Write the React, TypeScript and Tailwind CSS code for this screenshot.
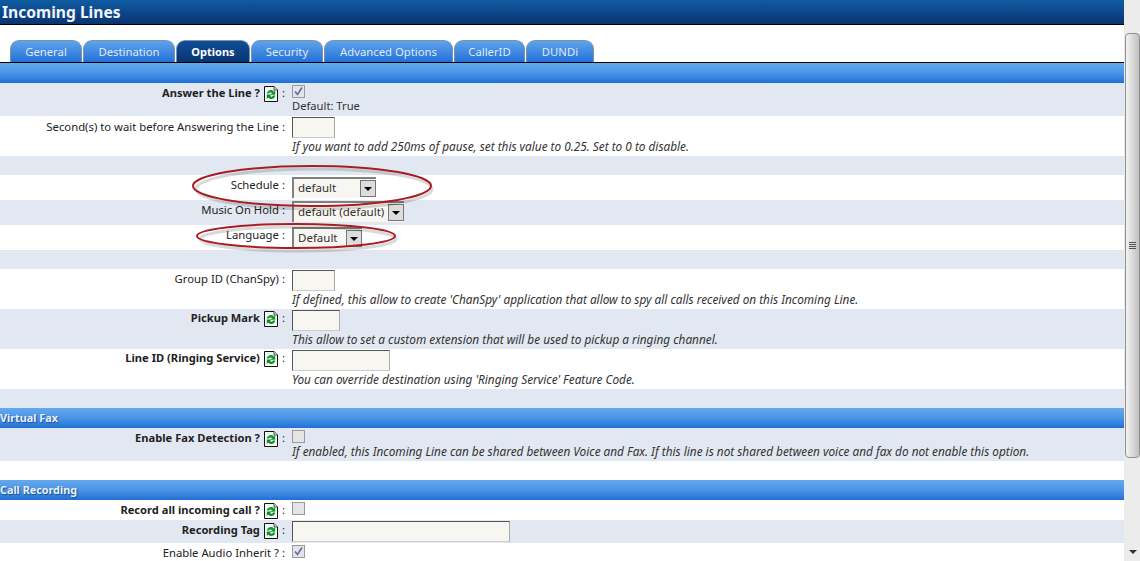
import { ReactNode } from 'react';

const tabs = [
  { label: 'General', w: 'w-[72px]' },
  { label: 'Destination', w: 'w-[92px]' },
  { label: 'Options', w: 'w-[74px]', active: true },
  { label: 'Security', w: 'w-[72px]' },
  { label: 'Advanced Options', w: 'w-[129px]' },
  { label: 'CallerID', w: 'w-[71px]' },
  { label: 'DUNDi', w: 'w-[68px]' },
];

function HelpIcon() {
  return (
    <svg width="14" height="16" viewBox="0 0 14 16" className="mt-[1px] shrink-0">
      <path d="M0.5 0.5H10L13.5 4V15.5H0.5Z" fill="#f4fbf4" stroke="#111" />
      <path d="M10 0.5V4H13.5" fill="#ddd" stroke="#111" strokeWidth="0.7" />
      <path d="M2.8 7.6C3.2 4 8 2.8 9.8 5.4L11.2 4V8.8H6.5L8 7.3C7 6 5.4 6.3 5 7.6Z" fill="#0f9d2c" />
      <path d="M11.2 9.4C10.8 13 6 14.2 4.2 11.6L2.8 13V8.6H7.5L6 10C7 11.2 8.6 10.9 9 9.4Z" fill="#0b8a27" />
    </svg>
  );
}

function Check({ checked }: { checked?: boolean }) {
  return (
    <span className="mt-[2px] flex h-[13px] w-[13px] items-center justify-center border border-[#9a9a9a] bg-[#e4e4e4]">
      {checked && (
        <svg width="11" height="11" viewBox="0 0 11 11">
          <path d="M2 5.5L4.5 8.5L9 1.5" fill="none" stroke="#5c6ea8" strokeWidth="1.6" />
        </svg>
      )}
    </span>
  );
}

function TextBox({ w }: { w: string }) {
  return (
    <input
      readOnly
      className={`${w} mt-[1px] block h-[21px] border border-t-[#555] border-l-[#555] border-r-[#aaa] border-b-[#ccc] bg-[#f8f6f0]`}
    />
  );
}

function Picker({ value, w }: { value: string; w: string }) {
  return (
    <div className={`${w} flex h-[21px] items-center justify-between border-t-2 border-l-2 border-t-[#808080] border-l-[#808080] bg-[#f8f6f0] pl-1`}>
      <span className="pb-[2px] text-[11.5px] whitespace-nowrap text-[#333]">{value}</span>
      <span className="flex h-[17px] w-[16px] shrink-0 items-center justify-center border border-[#777] bg-[#dcdcdc]">
        <span className="h-0 w-0 border-x-[4px] border-t-[4px] border-x-transparent border-t-black" />
      </span>
    </div>
  );
}

function Hint({ children }: { children: ReactNode }) {
  return <p className="text-[11.8px] leading-[14px] whitespace-nowrap italic text-[#333]">{children}</p>;
}

function Row({ h, shade, label, bold, icon, pt = 'pt-[2px]', children }: {
  h: string;
  shade?: boolean;
  label?: string;
  bold?: boolean;
  icon?: boolean;
  pt?: string;
  children?: ReactNode;
}) {
  return (
    <div className={`${h} ${shade ? 'bg-[#e2e8f1]' : 'bg-white'} grid grid-cols-[292px_1fr] overflow-visible`}>
      <div className={`${pt} ${icon ? 'gap-[4px]' : 'gap-[3px]'} flex items-start justify-end pr-[7px] leading-[15px] text-[#222]`}>
        {label && <span className={bold ? 'text-[11.15px] font-bold' : 'text-[11.3px]'}>{label}</span>}
        {icon && <HelpIcon />}
        {label && <span className="text-[11.5px]">:</span>}
      </div>
      <div>{children}</div>
    </div>
  );
}

function Band({ title }: { title?: string }) {
  return (
    <div className="h-5 bg-gradient-to-b from-[#65a9ee] via-[#4a94e6] to-[#1f6fd6] text-[10.8px] leading-5 font-bold text-[#e8f1fb] [text-shadow:1px_1px_1px_#1c4f8f]">
      {title}
    </div>
  );
}

export default function App() {
  return (
    <div className="flex h-[561px] w-[1140px] overflow-hidden bg-white font-['Noto_Sans',sans-serif]">
      <main className="relative w-[1124px] shrink-0">
        <header className="h-[25px] border-b border-black bg-gradient-to-b from-[#0f5ca2] to-[#0a3472] pl-[2px] text-[15.6px] leading-[24px] font-bold text-[#f0f4fa]">
          Incoming Lines
        </header>

        <nav className="flex h-[38px] items-end gap-[1px] border-b border-black pl-[10px]">
          {tabs.map((t) => (
            <div
              key={t.label}
              className={`${t.w} h-[22px] rounded-t-[9px] border border-b-0 border-[#7c93ad] text-center leading-[21px] ${
                t.active
                  ? 'bg-gradient-to-b from-[#0f4f96] to-[#0a3472] text-[11px] font-bold text-white'
                  : 'bg-gradient-to-b from-[#5fa3ea] to-[#2270d8] text-[11.3px] text-[#dfe9f6]'
              }`}
            >
              {t.label}
            </div>
          ))}
        </nav>

        <Band />
        <Row h="h-[33px]" shade label="Answer the Line ?" bold icon>
          <Check checked />
          <p className="mt-[1px] text-[11.2px] leading-[14px] text-[#333]">Default: True</p>
        </Row>
        <Row h="h-[40px]" label="Second(s) to wait before Answering the Line" pt="pt-[3px]">
          <TextBox w="w-[43px]" />
          <div className="mt-[1px]">
            <Hint>If you want to add 250ms of pause, set this value to 0.25. Set to 0 to disable.</Hint>
          </div>
        </Row>
        <Row h="h-[19px]" shade />
        <Row h="h-[25px]" label="Schedule">
          <div className="pt-[2px]"><Picker value="default" w="w-[84px]" /></div>
        </Row>
        <Row h="h-[25px]" shade label="Music On Hold">
          <div className="pt-[1px]"><Picker value="default (default)" w="w-[112px]" /></div>
        </Row>
        <Row h="h-[25px]" label="Language">
          <div className="pt-[2px]"><Picker value="Default" w="w-[70px]" /></div>
        </Row>
        <Row h="h-[19px]" shade />
        <Row h="h-[40px]" label="Group ID (ChanSpy)">
          <TextBox w="w-[43px]" />
          <div className="mt-[1px]">
            <Hint>If defined, this allow to create 'ChanSpy' application that allow to spy all calls received on this Incoming Line.</Hint>
          </div>
        </Row>
        <Row h="h-[40px]" shade label="Pickup Mark" bold icon pt="pt-[1px]">
          <TextBox w="w-[48px]" />
          <div className="mt-[1px]">
            <Hint>This allow to set a custom extension that will be used to pickup a ringing channel.</Hint>
          </div>
        </Row>
        <Row h="h-[40px]" label="Line ID (Ringing Service)" bold icon pt="pt-[1px]">
          <TextBox w="w-[98px]" />
          <div className="mt-[1px]">
            <Hint>You can override destination using 'Ringing Service' Feature Code.</Hint>
          </div>
        </Row>
        <Row h="h-[19px]" shade />
        <Band title="Virtual Fax" />
        <Row h="h-[33px]" shade label="Enable Fax Detection ?" bold icon>
          <Check />
          <div className="mt-[1px]">
            <Hint>If enabled, this Incoming Line can be shared between Voice and Fax. If this line is not shared between voice and fax do not enable this option.</Hint>
          </div>
        </Row>
        <Row h="h-[19px]" />
        <Band title="Call Recording" />
        <Row h="h-[20px]" label="Record all incoming call ?" bold icon>
          <Check />
        </Row>
        <Row h="h-[23px]" shade label="Recording Tag" bold icon>
          <TextBox w="w-[218px]" />
        </Row>
        <Row h="h-[18px]" label="Enable Audio Inherit ?">
          <Check checked />
        </Row>

        {/* hand-drawn red circles over the form */}
        <svg width="1124" height="561" className="pointer-events-none absolute top-0 left-0">
          <ellipse cx="314" cy="189" rx="118" ry="20" fill="none" stroke="#00000026" strokeWidth="3" />
          <ellipse cx="312" cy="186" rx="119" ry="20" fill="none" stroke="#a81c24" strokeWidth="2" />
          <ellipse cx="298" cy="239" rx="98" ry="12" fill="none" stroke="#00000026" strokeWidth="3" />
          <ellipse cx="296" cy="236" rx="99" ry="12" fill="none" stroke="#a81c24" strokeWidth="2" />
        </svg>
      </main>

      <aside className="flex w-[16px] shrink-0 flex-col bg-[#ececec] pl-[1px]">
        <div className="h-[33px]" />
        <div className="flex h-[425px] items-center justify-center rounded-sm border border-[#8f8f8f] bg-gradient-to-r from-[#f4f4f4] to-[#c0c0c0]">
          <span className="flex w-[7px] flex-col gap-[1px]">
            <span className="h-[1px] bg-[#555]" />
            <span className="h-[1px] bg-[#555]" />
            <span className="h-[1px] bg-[#555]" />
            <span className="h-[1px] bg-[#555]" />
          </span>
        </div>
        <div className="flex flex-1 items-end justify-center pb-[7px]">
          <span className="h-0 w-0 border-x-[4px] border-t-[4px] border-x-transparent border-t-[#333]" />
        </div>
      </aside>
    </div>
  );
}
